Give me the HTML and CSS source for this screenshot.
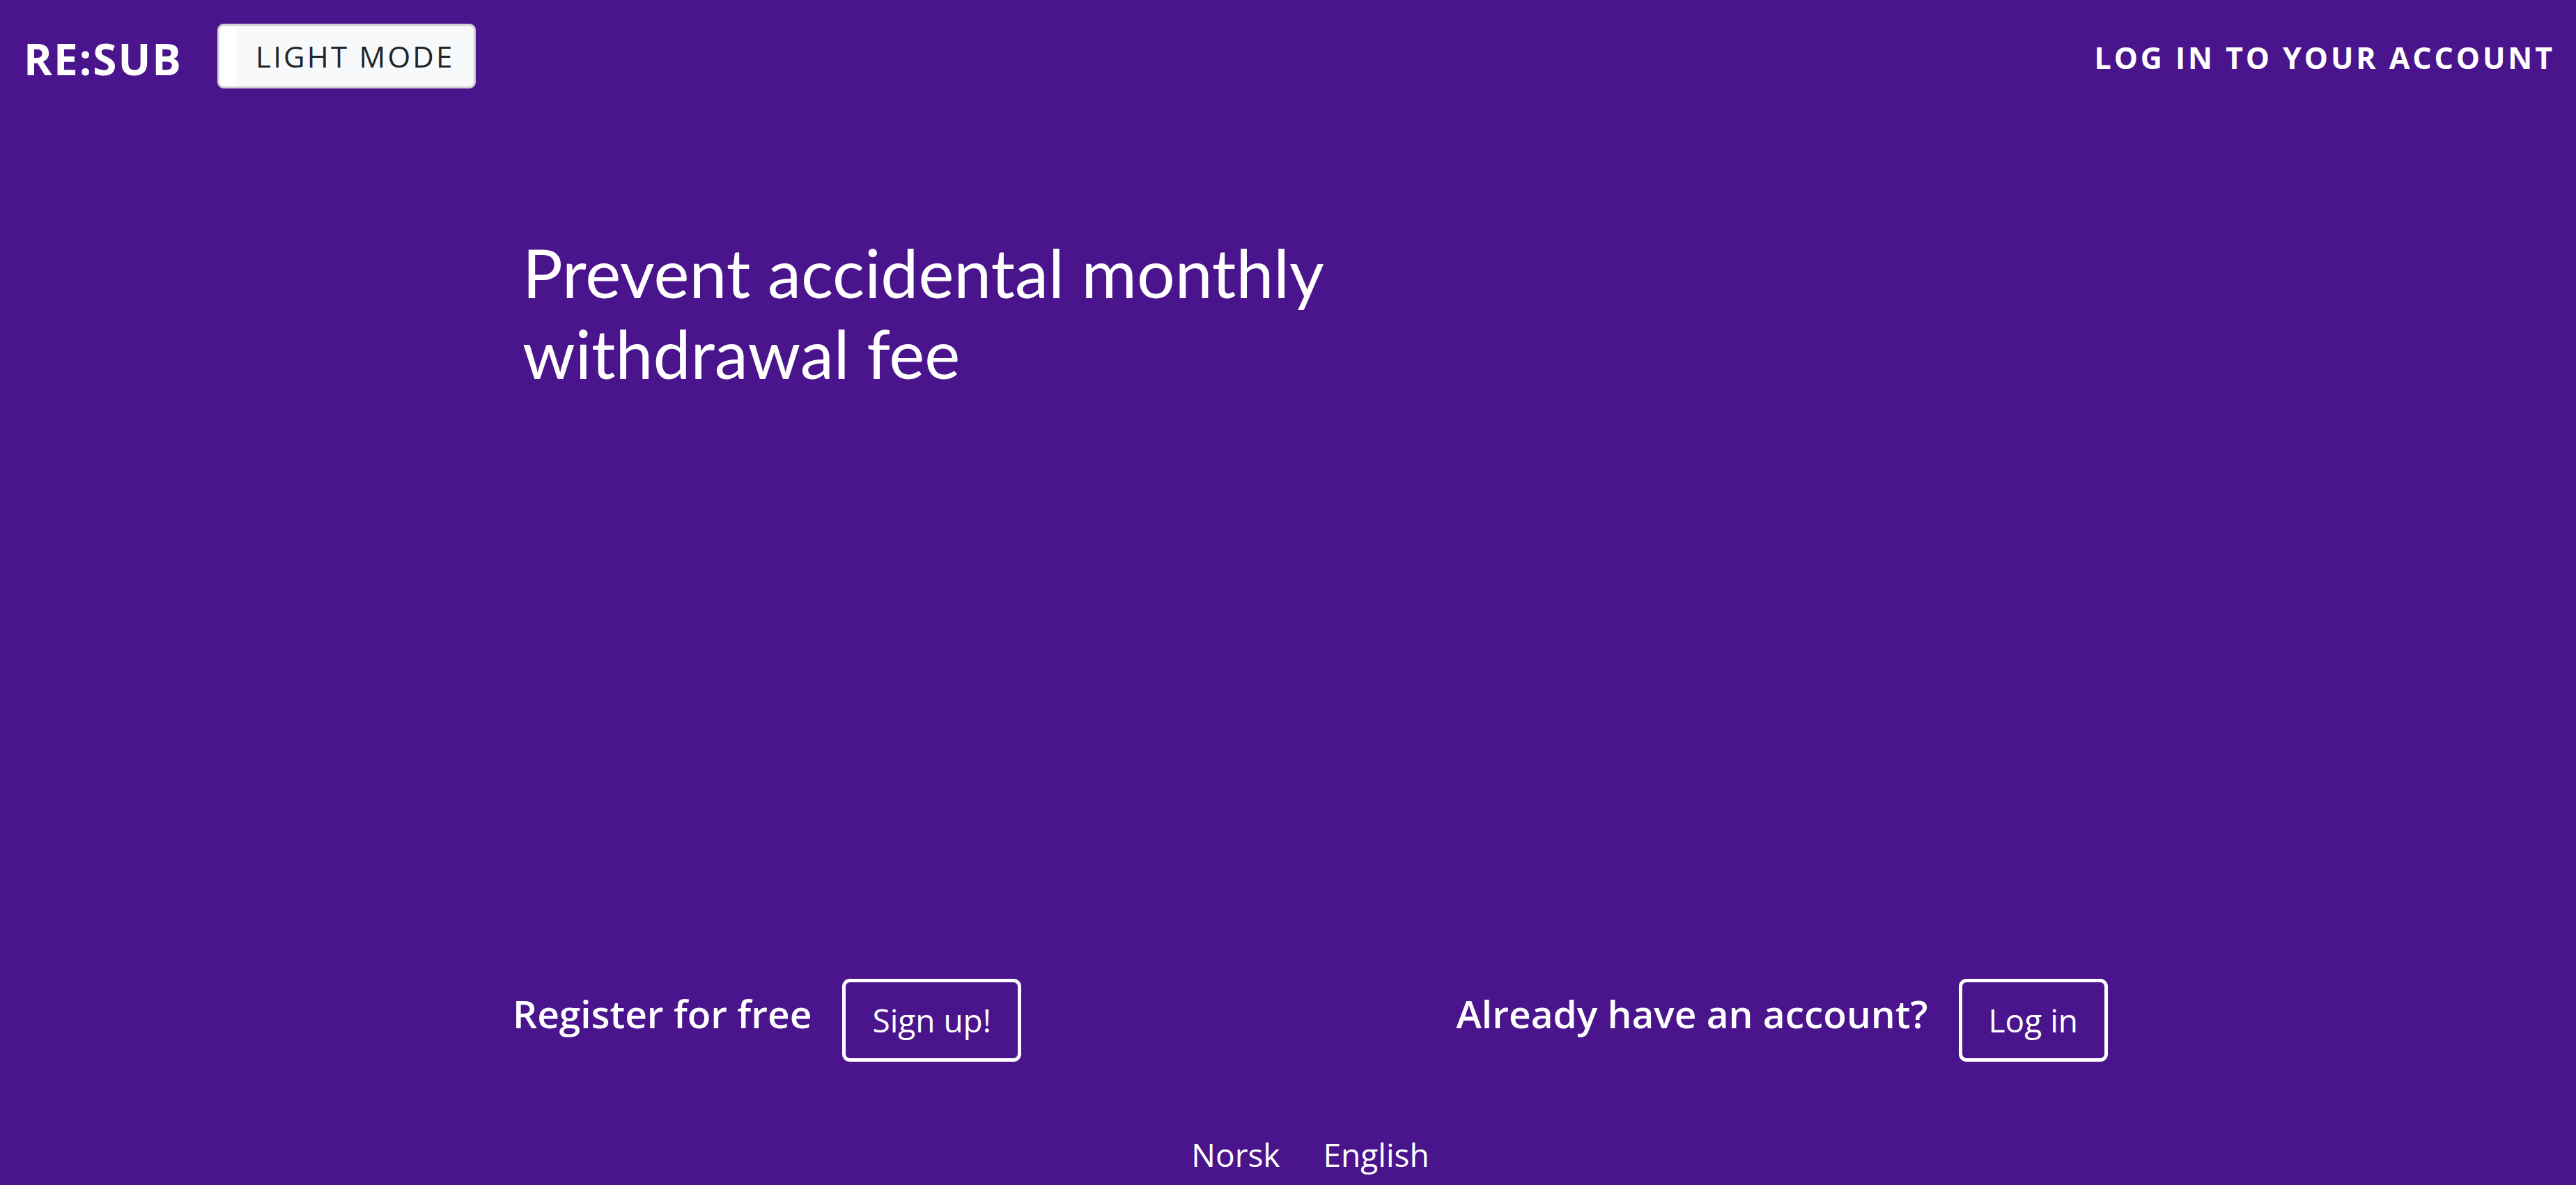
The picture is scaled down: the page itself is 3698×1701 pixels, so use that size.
FILE: index.html
```html
<!DOCTYPE html>
<html lang="en">
<head>
<meta charset="utf-8">
<title>RE:SUB</title>
<link rel="stylesheet" href="styles.css">
</head>
<body>
<header class="topbar">
  <a class="logo" href="#">RE:SUB</a>
  <button class="mode-btn" type="button">LIGHT MODE</button>
  <a class="nav-login" href="#">LOG IN TO YOUR ACCOUNT</a>
</header>
<div class="page">
  <main class="hero">
    <h1 class="hero-title">Prevent accidental monthly withdrawal fee</h1>
  </main>
  <section class="actions">
    <div class="action">
      <span class="action-label">Register for free</span>
      <a class="outline-btn" href="#">Sign up!</a>
    </div>
    <div class="action">
      <span class="action-label">Already have an account?</span>
      <a class="outline-btn" href="#">Log in</a>
    </div>
  </section>
  <footer class="langs">
    <a class="lang" href="#">Norsk</a>
    <a class="lang" href="#">English</a>
  </footer>
</div>
</body>
</html>
```
FILE: styles.css
```css
html, body {
  margin: 0;
  padding: 0;
}
body {
  background: #4a148c;
  color: #ffffff;
  font-family: "Open Sans", "Noto Sans", sans-serif;
  min-height: 100vh;
  display: flex;
  flex-direction: column;
}
a {
  color: #ffffff;
  text-decoration: none;
}
.topbar {
  display: flex;
  align-items: center;
  padding: 34px 30px 0 34px;
}
.logo {
  font-size: 62px;
  font-weight: 700;
  letter-spacing: 2px;
  line-height: 1;
  margin-top: 6px;
}
.mode-btn {
  margin-left: 50px;
  height: 93px;
  width: 371px;
  box-sizing: border-box;
  background: #f8f9fa;
  border: 3px solid #d0d1d3;
  border-radius: 9px;
  box-shadow: inset 24px 0 0 #ffffff;
  color: #212529;
  font-family: "Open Sans", "Noto Sans", sans-serif;
  font-size: 42px;
  letter-spacing: 3.2px;
  padding: 0 30px 0 52px;
  line-height: 1;
  white-space: nowrap;
}
.nav-login {
  margin-left: auto;
  font-size: 43px;
  font-weight: 700;
  letter-spacing: 3.9px;
  line-height: 1;
  margin-top: 3px;
}
.page {
  flex: 1;
  display: flex;
  flex-direction: column;
  align-items: center;
  padding-left: 64px;
}
.hero {
  flex: 1;
  width: 2290px;
  padding-top: 207px;
}
.hero-title {
  margin: 0;
  padding-left: 14px;
  max-width: 1200px;
  font-family: Lato, "Open Sans", sans-serif;
  font-weight: 400;
  font-size: 96.5px;
  line-height: 1.2;
}
.actions {
  width: 2290px;
  display: flex;
  justify-content: space-between;
  margin-bottom: 98px;
}
.action {
  display: flex;
  align-items: center;
  gap: 44px;
}
.action-label {
  font-size: 55px;
  font-weight: 600;
  line-height: 1.2;
  margin-bottom: 18px;
}
.outline-btn {
  border: 5px solid #ffffff;
  border-radius: 11px;
  padding: 20px 38px;
  font-size: 46px;
  line-height: 1.5;
}
.langs {
  display: flex;
  justify-content: center;
  gap: 62px;
  padding-bottom: 8px;
}
.lang {
  font-size: 46px;
  line-height: 1.55;
}
```
